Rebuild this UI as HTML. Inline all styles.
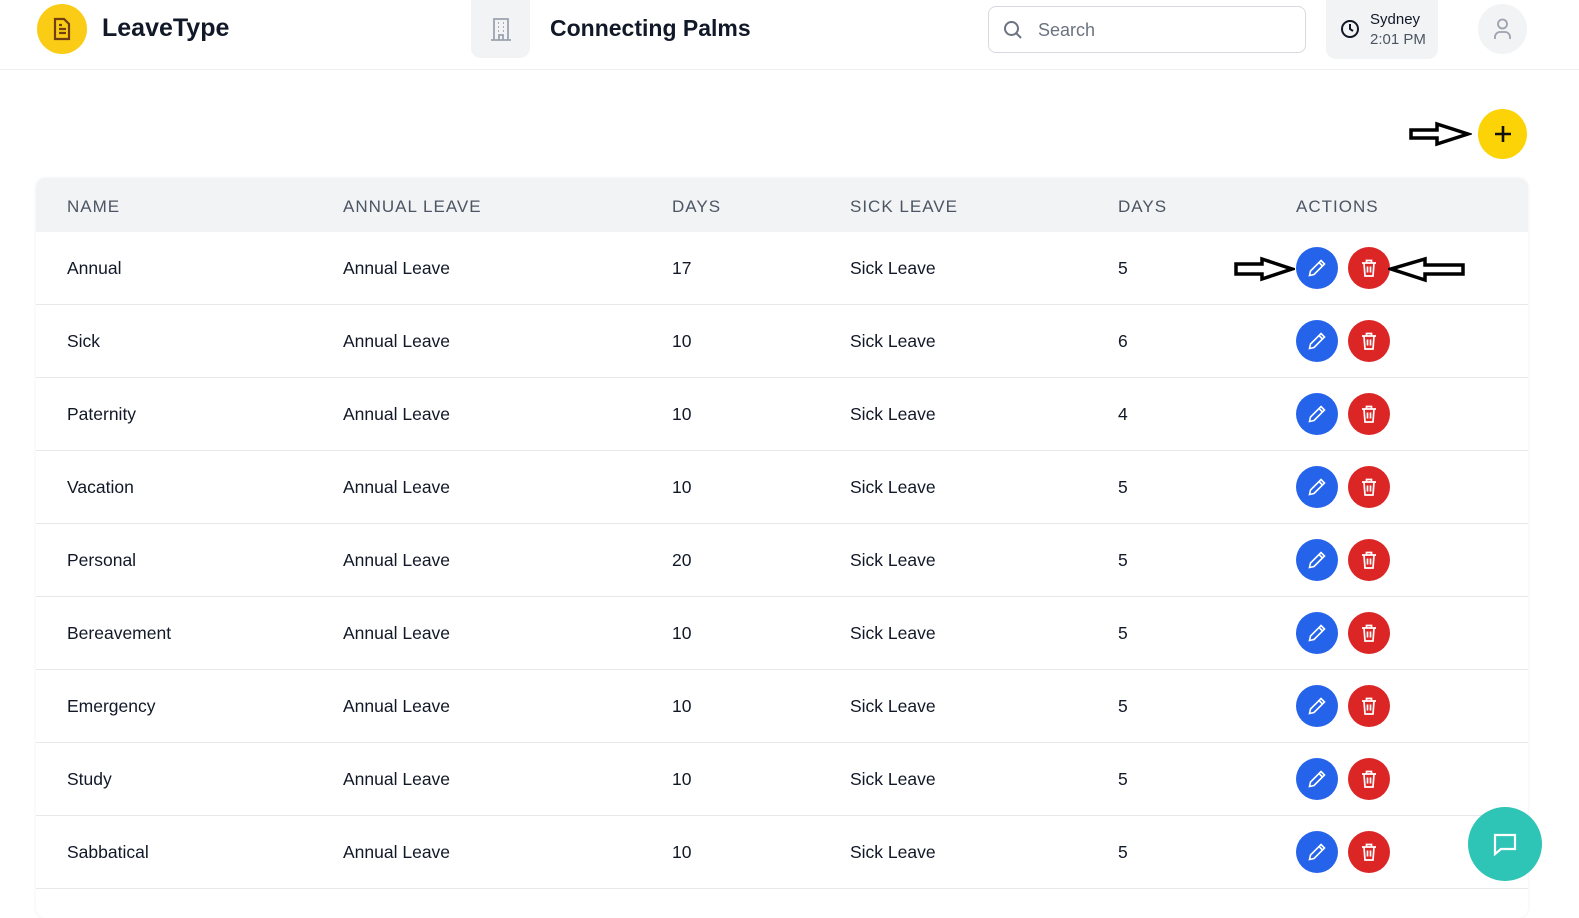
<!DOCTYPE html>
<html><head><meta charset="utf-8"><style>
*{margin:0;padding:0;box-sizing:border-box}
body{width:1579px;height:906px;overflow:hidden;background:#fff;font-family:"Liberation Sans",sans-serif;color:#111827;position:relative}
.abs{position:absolute}
.top{position:absolute;left:0;top:0;width:1579px;height:70px;border-bottom:1px solid #eceef1;background:#fff}
.table{position:absolute;left:36px;top:178px;width:1492px;height:740px;border-radius:10px;box-shadow:0 0 3px rgba(0,0,0,.08);background:#fff;overflow:hidden}
.thead{position:absolute;left:0;top:0;width:100%;height:54px;background:#f2f3f5}
.th{position:absolute;top:19px;font-size:17px;letter-spacing:1px;color:#4b5563}
.row{position:absolute;left:0;width:100%;height:73px;border-bottom:1.5px solid #e7e8eb}
.td{position:absolute;top:26px;font-size:17.5px;color:#111827}
.btn{position:absolute;top:15px;width:42px;height:42px;border-radius:50%;display:flex;align-items:center;justify-content:center}
</style></head><body>
<div class="top">
 <div class="abs" style="left:37px;top:4px;width:50px;height:50px;border-radius:50%;background:#facc15;display:flex;align-items:center;justify-content:center">
  <svg width="22" height="24" viewBox="0 0 22 24" fill="none" stroke="#713f12" stroke-width="2.2"><path d="M4 2h9l5 5v15H4z"/><path d="M8 12h7M8 16h7M8 8h3"/></svg>
 </div>
 <div class="abs" style="left:102px;top:14px;font-size:25px;font-weight:bold;color:#111827">LeaveType</div>
 <div class="abs" style="left:471px;top:0;width:59px;height:58px;border-radius:0 0 10px 10px;background:#f2f3f5;display:flex;align-items:center;justify-content:center">
  <svg width="24" height="26" viewBox="0 0 24 26" fill="none" stroke="#9ca3af" stroke-width="1.8"><path d="M5 24V3h14v21M2 24h20M10 24v-5h4v5"/><path d="M9 7h1M14 7h1M9 11h1M14 11h1M9 15h1M14 15h1"/></svg>
 </div>
 <div class="abs" style="left:550px;top:15px;font-size:23px;font-weight:bold;color:#111827">Connecting Palms</div>
 <div class="abs" style="left:988px;top:6px;width:318px;height:47px;border:1.5px solid #d6d9de;border-radius:8px">
  <svg class="abs" style="left:14px;top:13px" width="20" height="20" viewBox="0 0 20 20" fill="none" stroke="#6b7280" stroke-width="2"><circle cx="8.5" cy="8.5" r="6.5"/><path d="M13.5 13.5L18 18"/></svg>
  <div class="abs" style="left:49px;top:13px;font-size:18px;color:#6b7280">Search</div>
 </div>
 <div class="abs" style="left:1326px;top:0;width:112px;height:59px;border-radius:0 0 10px 10px;background:#f2f3f5">
  <svg class="abs" style="left:14px;top:19px" width="20" height="20" viewBox="0 0 20 20" fill="none" stroke="#111827" stroke-width="2"><circle cx="10" cy="10" r="8"/><path d="M10 5v5l3 2"/></svg>
  <div class="abs" style="left:44px;top:11px;font-size:15px;color:#111827">Sydney</div>
  <div class="abs" style="left:44px;top:31px;font-size:15px;color:#4b5563">2:01 PM</div>
 </div>
 <div class="abs" style="left:1478px;top:4px;width:49px;height:50px;border-radius:50%;background:#f2f3f5">
  <svg class="abs" style="left:14px;top:14px" width="21" height="22" viewBox="0 0 21 22" fill="none" stroke="#9ca3af" stroke-width="1.8"><circle cx="10.5" cy="6" r="4.5"/><path d="M3 21v-2a5 5 0 0 1 5-5h5a5 5 0 0 1 5 5v2"/></svg>
 </div>
</div>
<svg class="abs" style="left:1408px;top:121px" width="64" height="26" viewBox="0 0 64 26" fill="none" stroke="#000" stroke-width="3.5"><path d="M3 9h26V3l31 10-31 10v-6H3z"/></svg>
<div class="abs" style="left:1478px;top:109px;width:49px;height:50px;border-radius:50%;background:#fcd307;display:flex;align-items:center;justify-content:center">
 <svg width="20" height="20" viewBox="0 0 20 20" stroke="#111" stroke-width="2.6"><path d="M10 2v16M2 10h16"/></svg>
</div>
<div class="table">
 <div class="thead">
  <div class="th" style="left:31px">NAME</div>
  <div class="th" style="left:307px">ANNUAL LEAVE</div>
  <div class="th" style="left:636px">DAYS</div>
  <div class="th" style="left:814px">SICK LEAVE</div>
  <div class="th" style="left:1082px">DAYS</div>
  <div class="th" style="left:1260px">ACTIONS</div>
 </div>
 <div id="rows"></div>
</div>
<svg class="abs" style="left:1233px;top:256px" width="62" height="26" viewBox="0 0 62 26" fill="none" stroke="#000" stroke-width="3.5"><path d="M3 8h26V3l30 10-30 10v-5H3z"/></svg>
<svg class="abs" style="left:1388px;top:256px" width="78" height="28" viewBox="0 0 78 28" fill="none" stroke="#000" stroke-width="3.5"><path d="M75 9H37V3L3 13l34 11v-6h38z"/></svg>
<div class="abs" style="left:1468px;top:807px;width:74px;height:74px;border-radius:50%;background:#2ec4b6;display:flex;align-items:center;justify-content:center">
 <svg width="28" height="28" viewBox="0 0 28 28" fill="none" stroke="#fff" stroke-width="2.2"><path d="M4 5h20v14H10l-6 5z"/></svg>
</div>
<script>
var d=[["Annual",17,5],["Sick",10,6],["Paternity",10,4],["Vacation",10,5],["Personal",20,5],["Bereavement",10,5],["Emergency",10,5],["Study",10,5],["Sabbatical",10,5]];
var h="";
d.forEach(function(r,i){
h+='<div class="row" style="top:'+(54+i*73)+'px">'+
'<div class="td" style="left:31px">'+r[0]+'</div>'+
'<div class="td" style="left:307px">Annual Leave</div>'+
'<div class="td" style="left:636px">'+r[1]+'</div>'+
'<div class="td" style="left:814px">Sick Leave</div>'+
'<div class="td" style="left:1082px">'+r[2]+'</div>'+
'<div class="btn" style="left:1260px;background:#2563eb"><svg width="20" height="20" viewBox="0 0 20 20" fill="none" stroke="#fff" stroke-width="1.6"><path d="M14 2.5l3.5 3.5L7 16.5 2.5 17.5 3.5 13z"/><path d="M12 4.5l3.5 3.5"/></svg></div>'+
'<div class="btn" style="left:1312px;background:#dc2626"><svg width="20" height="20" viewBox="0 0 20 20" fill="none" stroke="#fff" stroke-width="1.7"><path d="M3 5h14M7.5 5V2.5h5V5M5 5l1 13h8l1-13M8.5 8.5v6M11.5 8.5v6"/></svg></div>'+
'</div>';});
document.getElementById("rows").innerHTML=h;
</script>
</body></html>
